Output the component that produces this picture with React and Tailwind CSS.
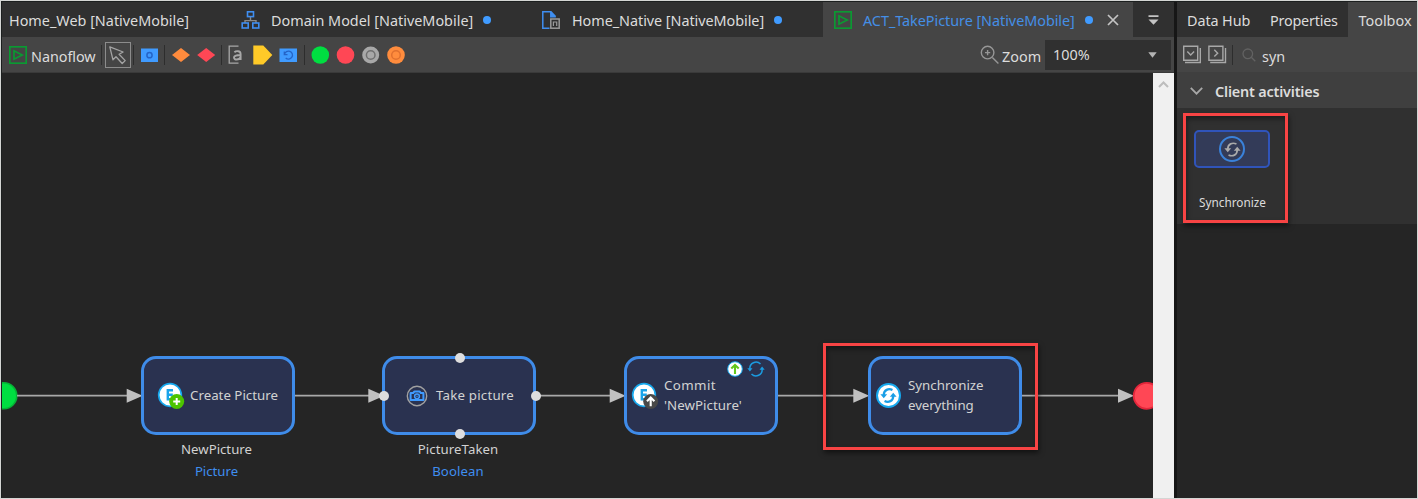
function FlowIcon() {
  return (
    <svg className="block shrink-0" width="18" height="18" viewBox="0 0 18 18" fill="none" stroke="#0a9a32" strokeWidth="1.7">
      <rect x="0.8" y="0.8" width="16.4" height="16.4" />
      <path d="M5 4.8v8.4l8.2-4.2z" />
    </svg>
  );
}

function DomainIcon() {
  return (
    <svg className="block shrink-0" width="19" height="18" viewBox="0 0 19 18" fill="none">
      <path d="M9.5 6v4M4 12v-2.4h11V12" stroke="#8a8a8a" strokeWidth="1.4" />
      <g stroke="#3f8ef0" strokeWidth="1.6">
        <rect x="6.5" y="0.8" width="6" height="4.8" />
        <rect x="1.2" y="12" width="6" height="5" />
        <rect x="11.8" y="12" width="6" height="5" />
      </g>
    </svg>
  );
}

function PageIcon() {
  return (
    <svg className="block shrink-0" width="18" height="18" viewBox="0 0 18 18" fill="none">
      <path d="M7.5 17.2H0.8V0.8H9L13.5 5.5M8.8 1v4.8h5" stroke="#3f8ef0" strokeWidth="1.5" />
      <path d="M9 1l4.8 4.8H9z" fill="#3f8ef0" />
      <rect x="8.8" y="8" width="8.4" height="9.2" fill="#303030" stroke="#9a9a9a" strokeWidth="1.5" />
      <path d="M11.4 15v-4h3.3v4" stroke="#9a9a9a" strokeWidth="1.2" />
    </svg>
  );
}

function Dot({ className }) {
  return <span className={`block size-2 shrink-0 rounded-full bg-[#409bff] ${className}`} />;
}

function Sep({ className }) {
  return <span className={`block h-5 w-px shrink-0 bg-[#2d2d2d] ${className}`} />;
}

function TabBar() {
  return (
    <div className="flex h-[35px] w-full items-center bg-[#303030] text-[14.4px] leading-[20px] whitespace-nowrap">
      <span className="mt-[2px] w-[232px] shrink-0 pl-[7px]">Home_Web [NativeMobile]</span>
      <div className="flex w-[301px] shrink-0 items-center pl-[7px]">
        <DomainIcon />
        <span className="mt-[2px] ml-[11px] w-[203px]">Domain Model [NativeMobile]</span>
        <Dot className="ml-[9px]" />
      </div>
      <div className="flex w-[288px] shrink-0 items-center pl-[7px]">
        <PageIcon />
        <span className="mt-[2px] ml-3 w-[193px] tracking-[-0.05px]">Home_Native [NativeMobile]</span>
        <Dot className="ml-[9px]" />
      </div>
      <div className="flex h-full w-[310px] shrink-0 items-center bg-[#454545] pl-[11px]">
        <FlowIcon />
        <span className="mt-[2px] ml-[11px] w-[212px] tracking-[-0.04px] text-[#448fe6]">ACT_TakePicture [NativeMobile]</span>
        <Dot className="ml-[10px]" />
        <svg className="ml-[14px] block" width="12" height="12" viewBox="0 0 12 12" stroke="#c4c4c4" strokeWidth="1.7">
          <path d="M1 1l10 10M11 1L1 11" />
        </svg>
      </div>
      <svg className="ml-[15px] block" width="11" height="12" viewBox="0 0 11 12" fill="#c4c4c4">
        <path d="M0.5 1.2h10v1.8H0.5zM0.5 5.6h10L5.5 10.8z" />
      </svg>
    </div>
  );
}

function Toolbar() {
  return (
    <div className="flex h-[35px] w-full items-center bg-[#454545] text-[14.4px] leading-[20px]">
      <div className="ml-[7px] flex items-center">
        <FlowIcon />
        <span className="mt-[4px] ml-[4px] w-[65px] tracking-[-0.05px]">Nanoflow</span>
      </div>
      <Sep className="ml-[5px]" />
      <span className="ml-[3px] flex h-[26px] w-[26px] items-center justify-center border border-[#8c8c8c]">
        <svg className="block" width="20" height="20" viewBox="0 0 20 20" fill="none" stroke="#a4a4a4" strokeWidth="1.3" strokeLinejoin="round">
          <path d="M1.800 1.800l3.200 13 3-3.100 6.200 6.800 3-2.900-6.100-6.300 4-2.300z" />
        </svg>
      </span>
      <Sep className="ml-[2px]" />
      <svg className="ml-[6px] block" width="19" height="20" viewBox="0 0 19 20">
        <rect x="1" y="3.500" width="17" height="13.500" fill="#409bff" />
        <circle cx="9.500" cy="10.200" r="2.600" fill="none" stroke="#2464c8" strokeWidth="1.500" />
      </svg>
      <Sep className="ml-[5px]" />
      <svg className="ml-[7px] block" width="45" height="20" viewBox="0 0 45 20">
        <path d="M0 10l9-7 9 7-9 7z" fill="#ff8b3d" />
        <path d="M25.200 10l9-7 9 7-9 7z" fill="#ff4755" />
      </svg>
      <Sep className="ml-[4px]" />
      <svg className="ml-[6px] block shrink-0" width="15" height="20" viewBox="0 0 15 20" fill="none" stroke="#a8a8a8">
        <path d="M10.500 1.200H1.200v17h9.300" strokeWidth="1.300" />
        <path d="M6.400 7.200c1.400-1.300 6.200-2 6.200 1.800v5.900M12.600 10c-4.300 0-6.600.5-6.600 2.600 0 2.700 5.200 2.600 6.600-.5" strokeWidth="1.900" />
      </svg>
      <svg className="ml-[10px] block shrink-0" width="45" height="20" viewBox="0 0 45 20">
        <path d="M0.300 0.500h10l9 9.500-9 9.500h-10z" fill="#ffca28" />
        <rect x="26.500" y="3.500" width="17.500" height="13.500" fill="#409bff" />
        <path d="M31.500 9.500a4 4 0 1 1 1.200 3.500M31.300 6.500v3.200h3.200" fill="none" stroke="#2464c8" strokeWidth="1.300" />
      </svg>
      <Sep className="ml-[6px]" />
      <svg className="ml-[6px] block shrink-0" width="95" height="20" viewBox="0 0 95 20">
        <circle cx="9.300" cy="10" r="8.800" fill="#00de41" />
        <circle cx="34.500" cy="10" r="8.800" fill="#ff4755" />
        <circle cx="59.700" cy="10" r="8.500" fill="#a8a8a8" />
        <circle cx="59.700" cy="10" r="4.300" fill="none" stroke="#707070" strokeWidth="1.500" />
        <circle cx="85" cy="10" r="8.800" fill="#ff8c3d" />
        <circle cx="85" cy="10" r="4.300" fill="none" stroke="#e0702f" strokeWidth="1.500" />
      </svg>
      <svg className="ml-auto block shrink-0" width="20" height="20" viewBox="0 0 20 20" fill="none" stroke="#979797" strokeWidth="1.400">
        <circle cx="7.600" cy="7.600" r="6.300" />
        <path d="M12.400 12.400l6 6M7.600 5v5.200M5 7.600h5.200" />
      </svg>
      <span className="mt-[4px] ml-[2px] w-[41px]">Zoom</span>
      <div className="mr-[3px] ml-[2px] flex h-[30px] w-[126px] items-center justify-between bg-[#303030] pr-[14px] pl-[8px]">
        <span className="mt-px">100%</span>
        <svg className="block" width="9" height="6" viewBox="0 0 9 6" fill="#b4b4b4">
          <path d="M0.300 0.300h8.400L4.500 5.700z" />
        </svg>
      </div>
    </div>
  );
}

function SyncArrows({ color, size, width = 1.8 }) {
  return (
    <svg className="block" width={size} height={size} viewBox="0 0 18 18" fill="none" stroke={color} strokeWidth={width}>
      <path d="M13.2 3.2C9 1.2 4 3 4 8.5" />
      <path d="M4.8 14.8C9 16.8 14 15 14 9.5" />
      <path d="M0.4 7.600h7.200L4 12zM10.400 10.400h7.200L14 6z" fill={color} stroke="none" />
    </svg>
  );
}

function EntityIcon({ badge }) {
  return (
    <svg className="block shrink-0" width="28" height="28" viewBox="0 0 28 28" fill="none">
      <circle cx="13" cy="13" r="11.300" fill="#fff" stroke="#16a8ee" strokeWidth="1.700" />
      <path d="M16 8.300h-5.200v9H16M10.800 12.700h5" stroke="#1ba4ea" strokeWidth="2.400" />
      <circle cx="19.700" cy="19.500" r="7.500" fill={badge === "plus" ? "#4cc400" : "#484848"} />
      {badge === "plus" ? (
        <path d="M19.700 16v7M16.200 19.500h7" stroke="#fff" strokeWidth="2" />
      ) : (
        <path d="M19.700 24.200v-8M16 19.200l3.700-3.700 3.700 3.700" stroke="#fff" strokeWidth="2.100" />
      )}
    </svg>
  );
}

function CameraIcon() {
  return (
    <svg className="block shrink-0" width="22" height="22" viewBox="0 0 22 22" fill="none">
      <circle cx="11" cy="11" r="9.700" stroke="#a0a0a0" strokeWidth="1.400" />
      <path d="M4.600 8h2.600l1.300-1.600h5L14.800 8h2.600v7H4.600z" stroke="#409bff" strokeWidth="2" strokeLinejoin="round" />
      <circle cx="11" cy="11.300" r="2.400" stroke="#409bff" strokeWidth="1.500" />
      <circle cx="11" cy="11.300" r="0.700" fill="#409bff" />
    </svg>
  );
}

function Node({ className, children }) {
  return (
    <div className={`absolute top-[283px] flex h-[79px] w-[154px] items-center rounded-[15px] border-[3px] border-[#3f8ce9] bg-[#2a3250] text-[13.3px] leading-[20px] whitespace-nowrap text-[#d2d2d2] ${className}`}>
      {children}
    </div>
  );
}

function Caption({ className, name, type }) {
  return (
    <div className={`absolute top-[366px] w-[155px] text-center text-[13.2px] leading-[21.500px] text-[#d2d2d2] ${className}`}>
      <div>{name}</div>
      <div className="text-[#3f8ef0]">{type}</div>
    </div>
  );
}

function Edges() {
  return (
    <svg className="absolute inset-0 block" width="1151" height="425" viewBox="2 73 1151 425">
      <circle cx="3.800" cy="395.800" r="13" fill="#00de41" stroke="#06b236" strokeWidth="1.600" />
      <g stroke="#a9a9a9" strokeWidth="1.700">
        <path d="M17 395.700h112M295 395.700h75M536 395.700h76M778 395.700h78M1021 395.700h100" />
      </g>
      <g fill="#c0c0c0">
        <path d="M126.700 388.800v14l16-7zM368.300 388.800v14l16-7zM609.700 388.800v14l16-7zM853.300 388.800v14l16-7zM1118 388.800v14l16-7z" />
      </g>
      <circle cx="1146.700" cy="395.800" r="13" fill="#ff4755" stroke="#e3263b" strokeWidth="1.800" />
    </svg>
  );
}

function Handle({ className }) {
  return <span className={`absolute size-[10px] rounded-full bg-[#dedede] ${className}`} />;
}

function Canvas() {
  return (
    <div className="relative h-full flex-1 overflow-hidden bg-[#252525]">
      <Edges />
      <Node className="left-[139px] pl-[13px]">
        <EntityIcon badge="plus" />
        <span className="-mt-[2px] ml-[5px]">Create Picture</span>
      </Node>
      <Caption className="left-[137px]" name="NewPicture" type="Picture" />
      <Node className="left-[380px] pl-[21px]">
        <CameraIcon />
        <span className="-mt-[2px] ml-[8px] tracking-[0.200px]">Take picture</span>
      </Node>
      <Handle className="top-[280px] left-[452.500px]" />
      <Handle className="top-[355.500px] left-[452.500px]" />
      <Handle className="top-[318px] left-[377px]" />
      <Handle className="top-[318px] left-[528.500px]" />
      <Caption className="left-[378.500px] tracking-[0.100px]" name="PictureTaken" type="Boolean" />
      <Node className="left-[622px] pl-[4px]">
        <EntityIcon badge="up" />
        <span className="-mt-[2px] ml-[5px]">
          <span className="block tracking-[0.400px]">Commit</span>
          <span className="block tracking-[0.050px]">'NewPicture'</span>
        </span>
        <span className="absolute top-[2px] right-[10px] flex items-center gap-1">
          <svg className="block" width="16" height="16" viewBox="0 0 16 16" fill="none">
            <circle cx="8" cy="8" r="7.300" fill="#fff" stroke="#16a8ee" strokeWidth="1" />
            <path d="M8 13V4.500M4.300 7.600L8 3.900l3.700 3.700" stroke="#63c81c" strokeWidth="2.100" />
          </svg>
          <svg className="block" width="18" height="16" viewBox="0 0 18 16" fill="none" stroke="#1b9be0" strokeWidth="1.500">
            <path d="M13.500 3A6.200 6.200 0 0 0 2.900 8M4.500 13A6.200 6.200 0 0 0 15.100 8" />
            <path d="M0.300 7.200h5.200L2.900 10.400zM12.500 8.800h5.200L15.100 5.600z" fill="#1b9be0" stroke="none" />
          </svg>
        </span>
      </Node>
      <Node className="left-[866px] pl-[5px]">
        <span className="flex size-[25px] items-center justify-center rounded-full border-2 border-[#16a8ee] bg-white">
          <SyncArrows color="#1a9fe6" size={17} width={2.4} />
        </span>
        <span className="-mt-[2px] ml-[7px]">
          <span className="block">Synchronize</span>
          <span className="block tracking-[-0.100px]">everything</span>
        </span>
      </Node>
      <div className="absolute top-[270px] left-[821px] h-[107px] w-[215px] border-[3px] border-[#f84444] shadow-[1px_3px_5px_rgba(0,0,0,0.5),inset_1px_3px_5px_rgba(0,0,0,0.4)]" />
    </div>
  );
}

function ToolboxPanel() {
  return (
    <div className="flex h-full w-[240px] shrink-0 flex-col bg-[#252525]">
      <div className="flex h-[35px] items-center bg-[#303030] text-[14.4px] leading-[20px] whitespace-nowrap">
        <span className="mt-[2px] w-[83.500px] pl-[10px] tracking-[-0.100px]">Data Hub</span>
        <span className="mt-[2px] w-[87.500px] pl-[9.500px] tracking-[-0.220px]">Properties</span>
        <span className="flex h-full flex-1 items-center bg-[#454545] pt-[2px] pl-[10.500px]">Toolbox</span>
      </div>
      <div className="flex h-[35px] items-center bg-[#454545] text-[14.4px]">
        <svg className="ml-[6px] block shrink-0" width="45" height="19" viewBox="0 0 45 19" fill="none" stroke="#a8a8a8" strokeWidth="1.400">
          <path d="M0.700 1.200h14v14h-14zM2 17.500h15.300V3M4.300 6.500l3.400 3.400 3.400-3.400" />
          <path d="M25.900 1.200h14v14h-14zM27.200 17.500h15.300V3M31.300 4.800l3.400 3.400-3.400 3.400" />
        </svg>
        <Sep className="ml-[4px]" />
        <svg className="ml-[8.500px] block" width="14" height="14" viewBox="0 0 14 14" fill="none" stroke="#626262" strokeWidth="1.300">
          <circle cx="5.800" cy="5.800" r="4.800" />
          <path d="M9.300 9.300l4 4" />
        </svg>
        <span className="mt-[4px] ml-[6.500px] leading-[20px]">syn</span>
      </div>
      <div className="flex h-[36px] items-center bg-[#3f3f3f]">
        <svg className="mt-px ml-[13px] block" width="13" height="8" viewBox="0 0 13 8" fill="none" stroke="#a8a8a8" strokeWidth="1.800">
          <path d="M0.800 0.800l5.700 5.900 5.700-5.900" />
        </svg>
        <span className="mt-[4px] ml-[12px] text-[14.4px] leading-[20px] font-semibold tracking-[-0.180px]">Client activities</span>
      </div>
      <div className="h-[116px] bg-[#303030] pt-[5px] pl-[6px]">
        <div className="flex h-[110px] w-[105px] flex-col items-center border-[3px] border-[#f84444] pt-[14px] pr-[7px] shadow-[1px_3px_5px_rgba(0,0,0,0.5),inset_1px_3px_5px_rgba(0,0,0,0.4)]">
          <div className="flex h-[38px] w-[76px] shrink-0 items-center justify-center rounded-[5px] border-2 border-[#3054ba] bg-[#333b58]">
            <span className="flex size-[26px] items-center justify-center rounded-full border-2 border-[#3a82da]">
              <SyncArrows color="#aaa" size={17} width={1.8} />
            </span>
          </div>
          <span className="mt-[25px] ml-px text-[11.800px] leading-[18px]">Synchronize</span>
        </div>
      </div>
    </div>
  );
}

export default function App() {
  return (
    <div className="flex h-[499px] w-[1418px] overflow-hidden border border-[#d4d6d4] bg-[#1c1f1f] pt-px pl-px font-['Noto_Sans','Open_Sans',sans-serif] text-[#dcdcdc]">
      <div className="flex h-full w-[1172px] shrink-0 flex-col">
        <TabBar />
        <Toolbar />
        <div className="flex min-h-0 flex-1 border-t border-[#3a3a3a]">
          <Canvas />
          <div className="flex w-[21px] shrink-0 justify-center bg-[#f0f0f0] pt-[8px]">
            <svg className="block" width="11" height="7" viewBox="0 0 11 7" fill="none" stroke="#bdbdbd" strokeWidth="2">
              <path d="M1 6l4.500-4.500L10 6" />
            </svg>
          </div>
        </div>
      </div>
      <div className="w-[3px] shrink-0 bg-[#161616]" />
      <ToolboxPanel />
    </div>
  );
}
